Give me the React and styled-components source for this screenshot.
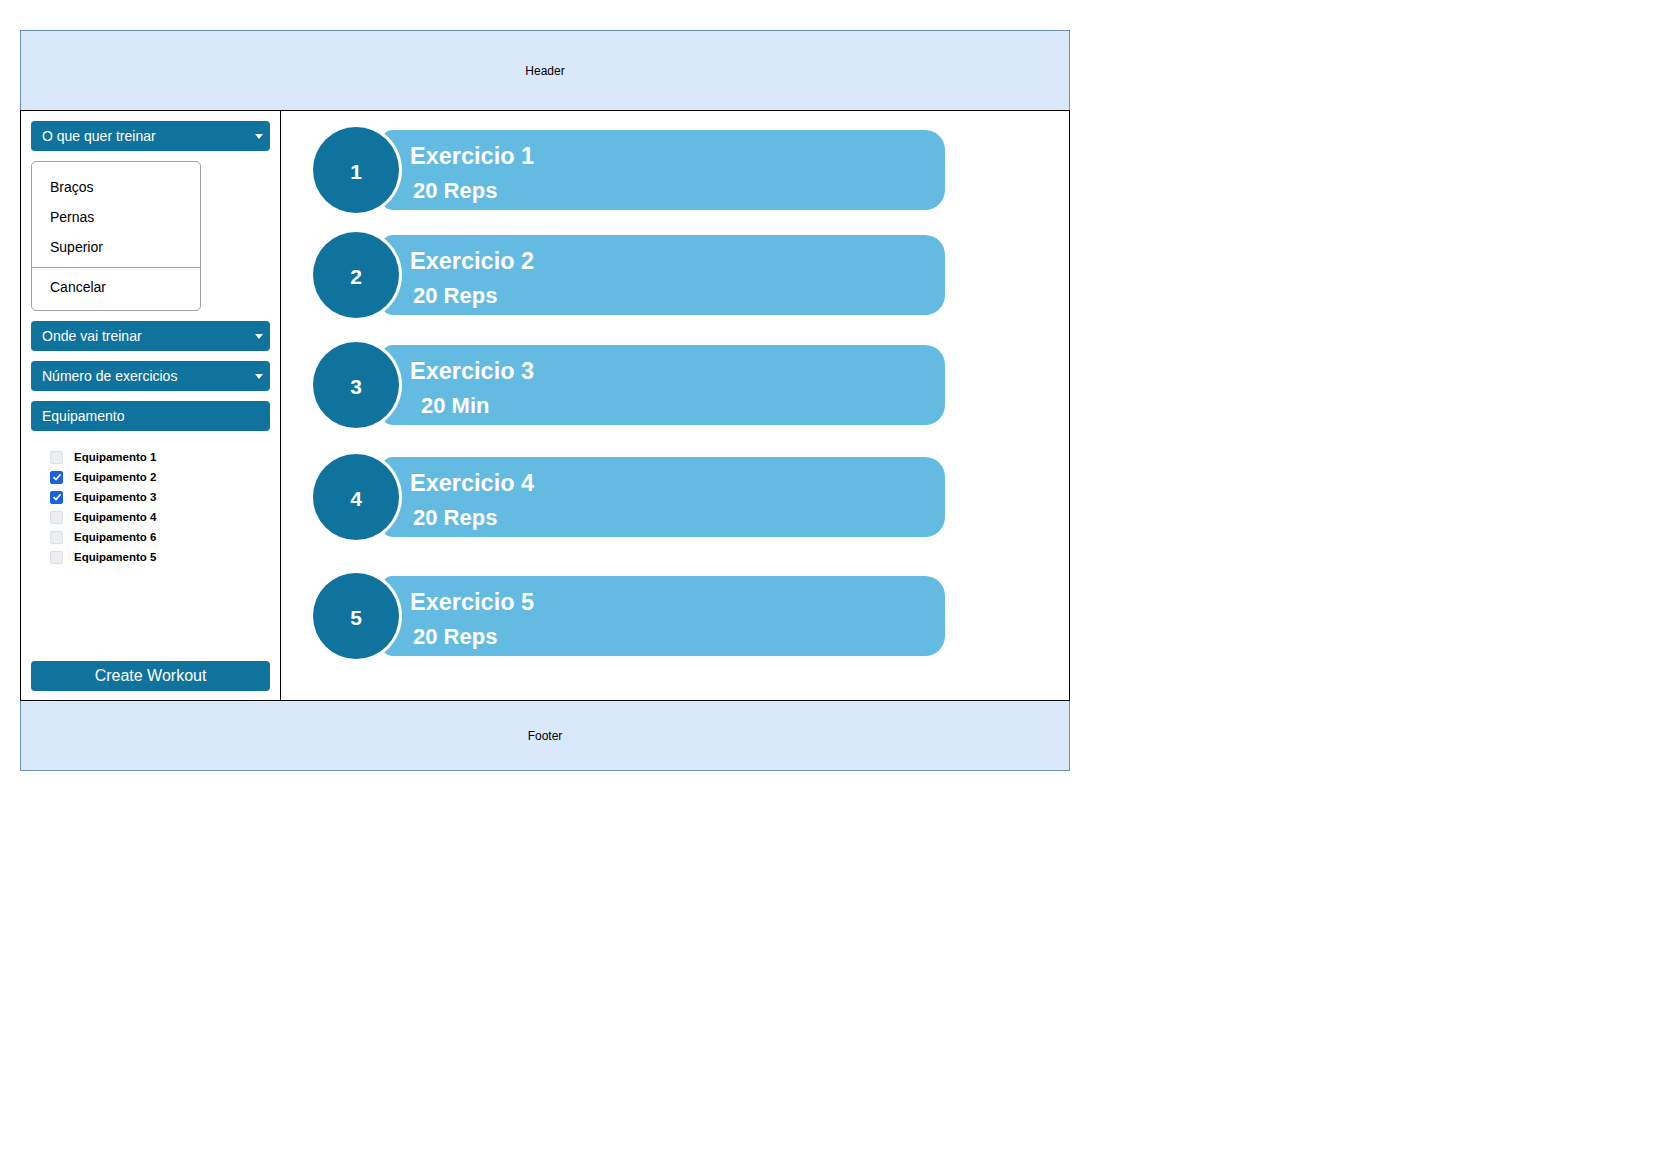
import React from "react";
import styled, { createGlobalStyle } from "styled-components";

const GlobalStyle = createGlobalStyle`
  body {
    margin: 0;
    background: #ffffff;
    font-family: "Liberation Sans", Arial, Helvetica, sans-serif;
  }
`;

const Frame = styled.div`
  width: 1050px;
  margin: 30px 0 0 20px;
  display: flex;
  flex-direction: column;
`;

const Band = styled.div`
  height: ${(p) => p.h}px;
  box-sizing: border-box;
  background: #dae8fc;
  border: 1px solid #6c8ebf;
  ${(p) => (p.top ? "border-bottom: none;" : "border-top: none;")}
  display: flex;
  align-items: center;
  justify-content: center;
  font-size: 12px;
  color: #000;
`;

const Main = styled.div`
  height: 591px;
  box-sizing: border-box;
  border: 1px solid #000;
  display: flex;
`;

const Sidebar = styled.aside`
  width: 260px;
  box-sizing: border-box;
  border-right: 1px solid #000;
  padding: 10px 10px 9px 10px;
  display: flex;
  flex-direction: column;
`;

const BlueButton = styled.div`
  height: 30px;
  box-sizing: border-box;
  background: #10739e;
  border-radius: 4px;
  color: #fff;
  font-size: ${(p) => (p.big ? 16 : 14)}px;
  display: flex;
  align-items: center;
  justify-content: ${(p) => (p.center ? "center" : "space-between")};
  padding: 0 7px 0 11px;
  margin-bottom: 10px;
  flex-shrink: 0;
`;

const Caret = styled.span`
  width: 0;
  height: 0;
  border-left: 4.5px solid transparent;
  border-right: 4.5px solid transparent;
  border-top: 5px solid #fff;
`;

const Menu = styled.div`
  width: 170px;
  height: 150px;
  box-sizing: border-box;
  border: 1px solid #a0a0a0;
  border-radius: 5px;
  padding-top: 10px;
  margin-bottom: 10px;
`;

const MenuItem = styled.div`
  height: 30px;
  line-height: 30px;
  padding-left: 18px;
  font-size: 14px;
  color: #000;
`;

const MenuDivider = styled.div`
  height: 1px;
  background: #a0a0a0;
  margin: 5px 0 4px;
`;

const CheckList = styled.div`
  margin-top: 6px;
  padding-left: 19px;
  display: flex;
  flex-direction: column;
`;

const CheckRow = styled.label`
  height: 20px;
  display: flex;
  align-items: center;
  gap: 11px;
  font-size: 11.5px;
  font-weight: bold;
  color: #000;
`;

const Box = styled.span`
  width: 13px;
  height: 13px;
  box-sizing: border-box;
  border-radius: 2px;
  display: flex;
  align-items: center;
  justify-content: center;
  background: ${(p) => (p.on ? "#1a62e0" : "#eceef2")};
  border: 1px solid ${(p) => (p.on ? "#1a62e0" : "#dde0e6")};
`;

const Bottom = styled(BlueButton)`
  margin-top: auto;
  margin-bottom: 0;
  padding: 0;
`;

const Content = styled.section`
  flex: 1;
  padding: 16px 0 0 32px;
  display: flex;
  flex-direction: column;
`;

const Row = styled.div`
  display: flex;
  align-items: center;
  margin-top: ${(p) => p.gap}px;
`;

const Circle = styled.div`
  width: 86px;
  height: 86px;
  box-sizing: border-box;
  padding-top: 4px;
  border-radius: 50%;
  background: #10739e;
  box-shadow: 0 0 0 3px #fff;
  color: #fff;
  font-weight: bold;
  font-size: 21px;
  display: flex;
  align-items: center;
  justify-content: center;
  position: relative;
  z-index: 1;
  flex-shrink: 0;
`;

const Card = styled.div`
  width: 563px;
  height: 80px;
  box-sizing: border-box;
  margin-left: -17px;
  background: #64bbe2;
  border-radius: 10px 20px 20px 10px;
  padding: 11px 0 0 28px;
  color: #fff;
  font-weight: bold;
`;

const Title = styled.div`
  font-size: 23.5px;
  line-height: 30px;
`;

const Amount = styled.div`
  font-size: 22px;
  line-height: 30px;
  margin-top: 5px;
  padding-left: ${(p) => p.indent}px;
`;

const equipment = [
  { name: "Equipamento 1", on: false },
  { name: "Equipamento 2", on: true },
  { name: "Equipamento 3", on: true },
  { name: "Equipamento 4", on: false },
  { name: "Equipamento 6", on: false },
  { name: "Equipamento 5", on: false },
];

const exercises = [
  { n: 1, amount: "20 Reps", gap: 0, indent: 3 },
  { n: 2, amount: "20 Reps", gap: 19, indent: 3 },
  { n: 3, amount: "20 Min", gap: 24, indent: 11 },
  { n: 4, amount: "20 Reps", gap: 26, indent: 3 },
  { n: 5, amount: "20 Reps", gap: 33, indent: 3 },
];

export default function App() {
  return (
    <>
      <GlobalStyle />
      <Frame>
        <Band h={80} top>
          Header
        </Band>
        <Main>
          <Sidebar>
            <BlueButton>
              O que quer treinar <Caret />
            </BlueButton>
            <Menu>
              <MenuItem>Braços</MenuItem>
              <MenuItem>Pernas</MenuItem>
              <MenuItem>Superior</MenuItem>
              <MenuDivider />
              <MenuItem>Cancelar</MenuItem>
            </Menu>
            <BlueButton>
              Onde vai treinar <Caret />
            </BlueButton>
            <BlueButton>
              Número de exercicios <Caret />
            </BlueButton>
            <BlueButton>Equipamento</BlueButton>
            <CheckList>
              {equipment.map((e) => (
                <CheckRow key={e.name}>
                  <Box on={e.on}>
                    {e.on && (
                      <svg width="10" height="10" viewBox="0 0 10 10">
                        <polyline
                          points="1.5,5.2 4,7.6 8.6,2.2"
                          fill="none"
                          stroke="#fff"
                          strokeWidth="1.6"
                        />
                      </svg>
                    )}
                  </Box>
                  {e.name}
                </CheckRow>
              ))}
            </CheckList>
            <Bottom big center>
              Create Workout
            </Bottom>
          </Sidebar>
          <Content>
            {exercises.map((x) => (
              <Row key={x.n} gap={x.gap}>
                <Circle>{x.n}</Circle>
                <Card>
                  <Title>Exercicio {x.n}</Title>
                  <Amount indent={x.indent}>{x.amount}</Amount>
                </Card>
              </Row>
            ))}
          </Content>
        </Main>
        <Band h={70}>Footer</Band>
      </Frame>
    </>
  );
}
